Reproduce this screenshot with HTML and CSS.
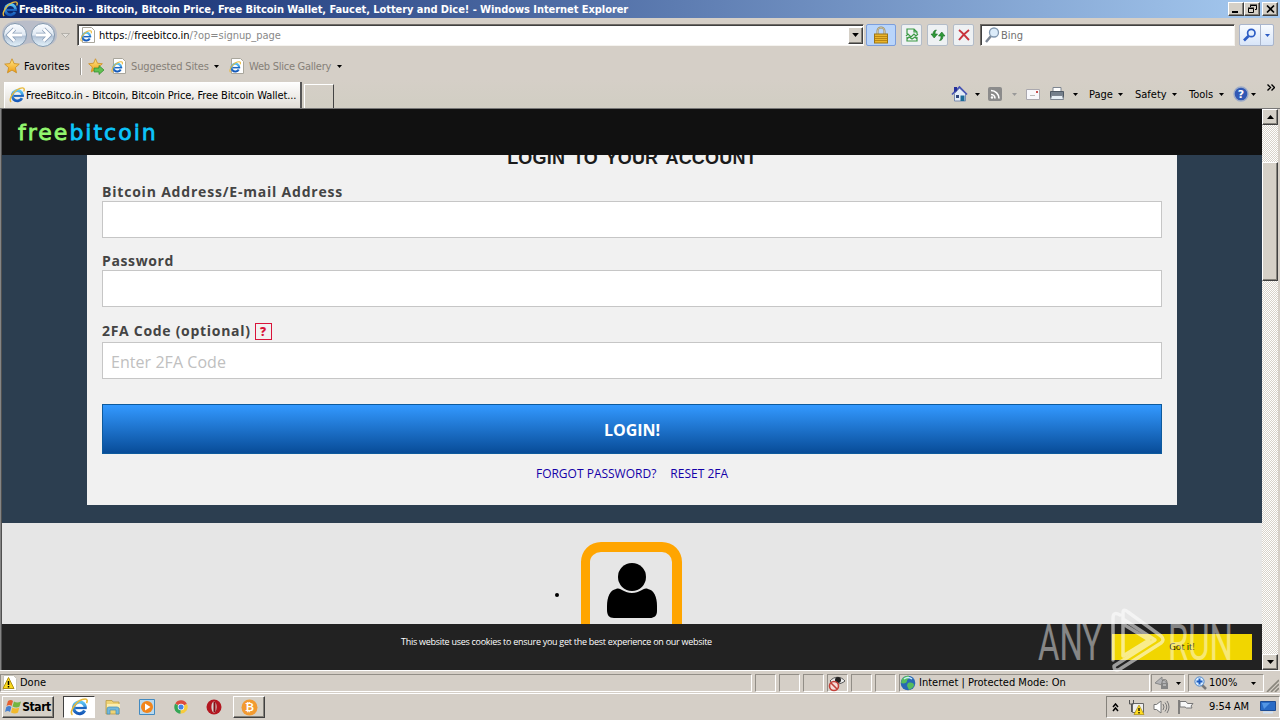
FILE: index.html
```html
<!DOCTYPE html>
<html lang="en">
<head>
<meta charset="utf-8">
<title>FreeBitco.in - Bitcoin, Bitcoin Price, Free Bitcoin Wallet, Faucet, Lottery and Dice!</title>
<link rel="stylesheet" href="styles.css">
</head>
<body>
<svg class="defs" width="0" height="0">
  <defs>
    <linearGradient id="blue" x1="0" y1="0" x2="0" y2="1"><stop offset="0" stop-color="#5bc4f5"/><stop offset="1" stop-color="#1558b8"/></linearGradient>
    <linearGradient id="glass" x1="0" y1="0" x2="0" y2="1"><stop offset="0" stop-color="#fafcff"/><stop offset=".5" stop-color="#dfe8f2"/><stop offset=".55" stop-color="#b4c4d8"/><stop offset="1" stop-color="#e4f2fa"/></linearGradient>
    <linearGradient id="gold" x1="0" y1="0" x2="0" y2="1"><stop offset="0" stop-color="#ffe88a"/><stop offset="1" stop-color="#f09c10"/></linearGradient>
    <symbol id="ie" viewBox="0 0 16 16">
      <path d="M13 11.200A5.200 5.200 0 1 1 13.600 8.400" fill="none" stroke="url(#blue)" stroke-width="2.800"/>
      <path d="M4.600 8.900h10.300" stroke="#1c66c0" stroke-width="2"/>
      <path d="M2.200 15C-1.500 12.500 6 1 13.500.900c2.200 0 2 2 1.200 3.600" fill="none" stroke="#e8b93a" stroke-width="1.400"/>
    </symbol>
    <symbol id="page-ie" viewBox="0 0 16 16">
      <path d="M2.500.5h9l3 3v12h-12z" fill="#fff" stroke="#a9a69c"/>
      <use href="#ie" x="0" y="3" width="12" height="12"/>
    </symbol>
    <symbol id="star" viewBox="0 0 16 16">
      <path d="M8 .8l2.100 4.800 5.200.500-3.900 3.500 1.100 5.200L8 12.100l-4.500 2.700 1.100-5.200L.7 6.100l5.200-.5z" fill="url(#gold)" stroke="#c98a1c" stroke-width=".8"/>
    </symbol>
    <symbol id="down" viewBox="0 0 5 3"><path d="M0 0h5L2.500 3z" fill="currentColor"/></symbol>
  </defs>
</svg>

<div class="titlebar">
  <svg class="i16"><use href="#ie"/></svg>
  <span class="title-text">FreeBitco.in - Bitcoin, Bitcoin Price, Free Bitcoin Wallet, Faucet, Lottery and Dice! - Windows Internet Explorer</span>
  <div class="win-buttons">
    <span class="raised"><svg width="11" height="10"><path d="M1 8h6" stroke="#000" stroke-width="2"/></svg></span>
    <span class="raised"><svg width="11" height="10"><path d="M3.500 3V1.500h6v4H8M1.500 4.500h5v4h-5zM3 1h7M1 4h6" fill="none" stroke="#000"/></svg></span>
    <span class="raised close"><svg width="11" height="10"><path d="M2 1.500l7 7M9 1.500l-7 7" stroke="#000" stroke-width="1.700"/></svg></span>
  </div>
</div>

<div class="navbar">
  <svg class="travel" width="70" height="30" viewBox="0 0 70 30">
    <path d="M12 3C20 1 38 1 45 3c8 1 12 6 12 13s-6 11-12 11c-7 0-9-3-14-3s-8 3-16 3C7 27 2 22 2 15S7 4 12 3z" fill="#b9bdc9"/>
    <circle cx="15" cy="16" r="11.500" fill="url(#glass)" stroke="#8197ad"/>
    <circle cx="43" cy="16" r="11.500" fill="url(#glass)" stroke="#8197ad"/>
    <path d="M22 16H9M14.500 10L8.500 16l6 6" fill="none" stroke="#8b9fb8" stroke-width="4.400"/>
    <path d="M22 16H9M14.500 10L8.500 16l6 6" fill="none" stroke="#fff" stroke-width="2.800"/>
    <path d="M36 16h13M43.500 10l6 6-6 6" fill="none" stroke="#8b9fb8" stroke-width="4.400"/>
    <path d="M36 16h13M43.500 10l6 6-6 6" fill="none" stroke="#fff" stroke-width="2.800"/>
    <path d="M61.500 14.500h8l-4 4z" fill="#e4e1dc" stroke="#aaa7a1" stroke-width=".8"/>
  </svg>
  <div class="address sunken">
    <svg class="i16"><use href="#page-ie"/></svg>
    <span class="url">https:<i>//</i>freebitco.in<i>/?op=signup_page</i></span>
    <span class="raised drop"><svg width="7" height="4"><use href="#down"/></svg></span>
  </div>
  <span class="tool lock"><svg width="16" height="18" viewBox="0 0 16 18"><path d="M4.500 9V5a3.500 3.500 0 0 1 7 0v4" fill="none" stroke="#9a8a60" stroke-width="2"/><path d="M4.500 9V5a3.500 3.500 0 0 1 7 0v4" fill="none" stroke="#d8d0b0" stroke-width=".8"/><rect x="1.500" y="8" width="13" height="9" fill="#eab52c" stroke="#9c7414"/><path d="M2 10.500h12M2 12.500h12M2 14.500h12" stroke="#b98512"/></svg></span>
  <span class="tool"><svg width="14" height="16" viewBox="0 0 14 16"><path d="M2 7V2h7l3 3v2M9 2v3h3M2 10v4h10v-4M1 9l2-2 3 3 3-3 2 2 2-2M2 12l2-2 3 2 3-2 2 2" fill="none" stroke="#3c9a45" stroke-width="1.200"/></svg></span>
  <span class="tool"><svg width="16" height="14" viewBox="0 0 16 14"><path d="M6.500 2C4 2 3 4 3 6H1l3.200 4L7.500 6H5C5 4 5.500 3 6.500 2zM9.500 12.500c2.500 0 3.500-2 3.500-4.500h2L11.800 4 8.500 8H11c0 2-.5 3.500-1.500 4.500z" fill="#2f9a38" stroke="#1c6d25" stroke-width=".6"/></svg></span>
  <span class="tool"><svg width="14" height="14" viewBox="0 0 14 14"><path d="M2 2c4 3 6 6 10 10M12 2C8 5 5 8 2 12" fill="none" stroke="#c8323c" stroke-width="2"/></svg></span>
  <div class="search sunken">
    <svg width="16" height="17" viewBox="0 0 16 17"><path d="M7 9l-5 6" stroke="#7d8795" stroke-width="2.500"/><circle cx="10" cy="5.500" r="4.500" fill="#dcecfa" stroke="#8298b0" stroke-width="1.300"/></svg>
    <span>Bing</span>
  </div>
  <div class="go"><svg width="20" height="20" viewBox="0 0 20 20"><path d="M8.500 11L4 15.500" stroke="#2c5cc4" stroke-width="2.600"/><circle cx="11.300" cy="8" r="3.700" fill="#e4effc" stroke="#2c5cc4" stroke-width="1.700"/></svg><span><svg width="5" height="3"><use href="#down"/></svg></span></div>
</div>

<div class="favorites">
  <svg class="i16 fav-star"><use href="#star"/></svg>
  <span class="fav-label">Favorites</span>
  <svg class="fav-add" width="18" height="17" viewBox="0 0 18 17"><use href="#star" width="15" height="15"/><path d="M6 10h5V7.500l5 4.500-5 4.500V14H6z" fill="#62c152" stroke="#2d8a2a" stroke-width=".7"/></svg>
  <svg class="i16 fav-page"><use href="#page-ie"/></svg>
  <span class="fav-suggested">Suggested Sites</span>
  <svg class="arrow"><use href="#down"/></svg>
  <svg class="i16 fav-page2"><use href="#page-ie"/></svg>
  <span class="fav-slice">Web Slice Gallery</span>
  <svg class="arrow"><use href="#down"/></svg>
</div>

<div class="tabs">
  <div class="tab"><svg class="i16"><use href="#ie"/></svg><span>FreeBitco.in - Bitcoin, Bitcoin Price, Free Bitcoin Wallet...</span></div>
  <div class="newtab"></div>
  <div class="commands">
    <svg class="home" width="17" height="18" viewBox="0 0 17 18"><path d="M3.500 8.500V16h11V8.500L8.500 3z" fill="#e3ecf8" stroke="#7a8cb0"/><path d="M1 9.500L8.500 2 16 9.500" fill="none" stroke="#4654b4" stroke-width="1.700"/><path d="M3 2h3v4L3 7z" fill="#26309c"/><path d="M9.500 10.500h4V16h-4z" fill="#1c6c98"/><path d="M5 10h3v3H5z" fill="#30467c"/></svg>
    <svg class="arrow a1"><use href="#down"/></svg>
    <svg class="rss" width="14" height="14" viewBox="0 0 14 14"><rect width="14" height="14" rx="2" fill="#8b8b8b"/><path d="M3 7.500a4 4 0 0 1 4 4M3 3.500a8 8 0 0 1 8 8" fill="none" stroke="#fff" stroke-width="1.600"/><circle cx="4" cy="10.500" r="1.200" fill="#fff"/></svg>
    <svg class="arrow a2"><use href="#down"/></svg>
    <svg class="mail" width="14" height="11" viewBox="0 0 14 11"><path d="M.5.500h13v10H.5z" fill="#f8f8fc" stroke="#aaa8ae"/><path d="M10 2h2v2h-2z" fill="#c85050"/><path d="M4 6.500h5" stroke="#bbb"/></svg>
    <svg class="printer" width="16" height="16" viewBox="0 0 16 16"><path d="M4 1.500h8V7H4z" fill="#fff" stroke="#7d8590"/><path d="M1.500 5.500h13v6h-13z" fill="#75808c" stroke="#4f5964"/><path d="M2.500 9.500h11l1 4h-13z" fill="#e8f0f6" stroke="#7d8590"/></svg>
    <svg class="arrow a3"><use href="#down"/></svg>
    <span class="c-page">Page</span><svg class="arrow"><use href="#down"/></svg>
    <span class="c-safety">Safety</span><svg class="arrow"><use href="#down"/></svg>
    <span class="c-tools">Tools</span><svg class="arrow"><use href="#down"/></svg>
    <svg class="help" width="16" height="16" viewBox="0 0 16 16"><circle cx="8" cy="8" r="7" fill="#3158b4" stroke="#9cabc8" stroke-width="1.400"/><text x="8" y="12" text-anchor="middle">?</text></svg>
    <svg class="arrow a4"><use href="#down"/></svg>
    <svg class="more" width="8" height="7" viewBox="0 0 8 7"><path d="M.5.500l3 3-3 3M4.500.500l3 3-3 3" fill="none" stroke="#000" stroke-width="1.400"/></svg>
  </div>
</div>

<div class="viewport">
  <main class="page">
    <header class="site-header"><span class="free">free</span><span class="coin">bitcoin</span></header>
    <section class="hero">
      <form class="panel">
        <h1>LOGIN TO YOUR ACCOUNT</h1>
        <label class="l1"><span>Bitcoin Address/E-mail Address</span></label>
        <div class="field"></div>
        <label class="l2"><span>Password</span></label>
        <div class="field"></div>
        <label class="l3"><span>2FA Code (optional)</span><b>?</b></label>
        <div class="field"><span>Enter 2FA Code</span></div>
        <div class="login"><span>LOGIN!</span></div>
        <div class="links"><a class="forgot">FORGOT PASSWORD?</a><a class="reset">RESET 2FA</a></div>
      </form>
    </section>
    <section class="feature">
      <span class="bullet"></span>
      <div class="user-box"><svg width="52" height="57" viewBox="0 0 52 57"><circle cx="26" cy="14" r="14" fill="#000"/><path d="M10 26c5-2 7 4 16 4s11-6 16-4c6 1 9 8 9 17v5c0 5-3 7-7 7H8c-5 0-7-3-7-8v-4c0-9 3-16 9-17z" fill="#000"/></svg></div>
    </section>
    <footer class="cookie"><span>This website uses cookies to ensure you get the best experience on our website</span><button>Got it!</button></footer>
  </main>
  <div class="scrollbar">
    <div class="raised sb-btn"><svg width="7" height="4" viewBox="0 0 7 4"><path d="M0 4h7L3.500 0z"/></svg></div>
    <div class="raised sb-thumb"></div>
    <div class="raised sb-btn sb-down"><svg width="7" height="4" viewBox="0 0 7 4"><path d="M0 0h7L3.500 4z"/></svg></div>
  </div>
</div>

<div class="status">
  <div class="cell done"><svg width="16" height="16" viewBox="0 0 16 16"><path d="M1.500.500h10l3 3v12h-13z" fill="#fff" stroke="#c8c5bc"/><path d="M6.500 2.500L12 13.500H1z" fill="#fbd91c" stroke="#b09010"/><path d="M6.500 6v4M6.500 11v1.500" stroke="#000" stroke-width="1.500"/></svg><span>Done</span></div>
  <div class="cell"></div><div class="cell"></div><div class="cell"></div>
  <div class="cell"><svg width="18" height="17" viewBox="0 0 18 17"><path d="M2 6C6 1 13 1 17 6c-5 4-11 4-15 0" fill="#eee" stroke="#555"/><circle cx="10" cy="5" r="3" fill="#222"/><circle cx="6" cy="11" r="4.500" fill="#f5dcd8" stroke="#c2413a" stroke-width="1.600"/><path d="M3 8l6 6" stroke="#c2413a" stroke-width="1.600"/></svg></div>
  <div class="cell"></div><div class="cell"></div>
  <div class="cell zone"><svg width="16" height="16" viewBox="0 0 16 16"><circle cx="8" cy="8" r="7.300" fill="#2868b4"/><path d="M2 4c2-3 6-4 7-3 1 3-2 3-2 5S4 9 1 8zM8 8c3-1 6 0 6 2s-3 4-5 5c-1-3-3-4-1-7z" fill="#56bd5c"/><path d="M4 4q4-3 8 0" stroke="#c9efff" stroke-width="1.500" fill="none"/></svg><span>Internet | Protected Mode: On</span></div>
  <div class="cell filter"><svg width="18" height="16" viewBox="0 0 18 16"><path d="M1 8l7-6v3q5 0 5 6H8v-1z" fill="#b4b4b6" stroke="#898989"/><path d="M8 8V7a2.500 2.500 0 0 1 5 0v1" fill="none" stroke="#777"/><path d="M7 8h7v6H7z" fill="#858585"/><path d="M9 10h3" stroke="#ddd"/></svg><svg class="arrow"><use href="#down"/></svg></div>
  <div class="cell zoom"><svg width="14" height="15" viewBox="0 0 14 15"><path d="M8 9l4 4" stroke="#777" stroke-width="2.500"/><circle cx="5.500" cy="5.500" r="4.600" fill="#d9edff" stroke="#4d86ca"/><path d="M5.500 2.500v6M2.500 5.500h6" stroke="#1d5cc0" stroke-width="2"/></svg><span>100%</span><svg class="arrow"><use href="#down"/></svg></div>
  <svg class="grip" width="13" height="13"><path d="M1 13L13 1M5 13l8-8M9 13l4-4" stroke="#8a877e" stroke-width="1.600"/></svg>
</div>

<div class="taskbar">
  <div class="start raised"><svg width="17" height="16" viewBox="0 0 17 16"><path d="M3 2q3-2 5 0L6.500 7q-2-2-5 0z" fill="#e66030"/><path d="M9 2.500q3 2 7 0L14.500 7.500q-3 2-7 0z" fill="#74b540"/><path d="M1.300 8q3-2 5 0L5 13q-2-2-5 0z" fill="#4680d0"/><path d="M7.300 8.500q3 2 7 0L13 13.500q-3 2-7 0z" fill="#f2b92c"/></svg><span>Start</span></div>
  <div class="task-ie"><svg width="18" height="18"><use href="#ie"/></svg></div>
  <svg class="t-folder" width="16" height="16" viewBox="0 0 16 16"><path d="M1 3V1.500h6L8 3h6v12H1z" fill="#efd374" stroke="#b99a44" stroke-width=".8"/><path d="M2 5h13v4H2z" fill="#fbedb0"/><path d="M2 15v-5q0-2 2-2h8q2 0 2 2v5h-3v-4H5v4z" fill="#72b8dc" stroke="#448eb8" stroke-width=".7"/></svg>
  <svg class="t-media" width="16" height="16" viewBox="0 0 16 16"><path d="M.5.500h15v15H.5z" fill="#b9d9ee" stroke="#438ac0"/><circle cx="8" cy="8" r="6" fill="#f2851b"/><path d="M6 4.500v7l5.500-3.500z" fill="#fff"/></svg>
  <svg class="t-chrome" width="14" height="14" viewBox="0 0 16 16"><path d="M8 8L1.500 4A7.500 7.500 0 0 1 14.700 4.500z" fill="#dd4b3e"/><path d="M8 8L1.300 4.200A7.600 7.600 0 0 0 7.500 15.600z" fill="#35a655"/><path d="M8 8l6.700-3.500A7.500 7.500 0 0 1 7.500 15.500z" fill="#f7cb3c"/><circle cx="8" cy="8" r="3.700" fill="#fff"/><circle cx="8" cy="8" r="2.900" fill="#4382e6"/></svg>
  <svg class="t-opera" width="16" height="16" viewBox="0 0 16 16"><circle cx="8" cy="8" r="7.500" fill="#b31720"/><ellipse cx="8" cy="8" rx="2.600" ry="5.500" fill="#d9d4cf"/><path d="M7.500 3h2v10h-2z" fill="#891016"/></svg>
  <div class="task-bit raised"><svg width="17" height="17" viewBox="0 0 17 17"><circle cx="8.500" cy="8.500" r="8" fill="#f29a31"/><text x="8.500" y="12" text-anchor="middle">₿</text></svg></div>
  <div class="tray">
    <svg class="y-chev" width="7" height="9" viewBox="0 0 7 9"><path d="M1 4l2.500-3L6 4M1 8l2.500-3L6 8" fill="none" stroke="#000" stroke-width="1.500"/></svg>
    <svg class="y-net" width="17" height="16" viewBox="0 0 17 16"><path d="M4.500 4.500h11v9h-11z" fill="#eee" stroke="#666"/><path d="M1.500 1v4h4V1M3.500 5v8" fill="none" stroke="#555"/><path d="M11 6l5 9.500H6z" fill="#ffdc20" stroke="#a78c10" stroke-width=".7"/><path d="M11 9v3M11 13v1.500" stroke="#000" stroke-width="1.300"/></svg>
    <svg class="y-vol" width="17" height="14" viewBox="0 0 17 14"><path d="M1 4.500h2.500L8 1v12L3.500 9.500H1z" fill="#fff" stroke="#777"/><path d="M10 4q2 3 0 6M12 2.500q3.500 4.500 0 9M14 1q4 6 0 12" fill="none" stroke="#777"/></svg>
    <svg class="y-flag" width="17" height="14" viewBox="0 0 17 14"><path d="M2 0v14" stroke="#666" stroke-width="1.500"/><path d="M3 1.500h6l1.500 2H16l-2 2.500 1 2H9.500L8 7H3z" fill="#f8f8f8" stroke="#777"/></svg>
    <span>9:54 AM</span>
    <svg class="y-desk" width="16" height="13" viewBox="0 0 16 13"><path d="M.5.500h15v9H.5z" fill="#296bc6" stroke="#1d4c94"/><path d="M2 2h8L4 8z" fill="#5396e4"/><path d="M3 11.500h10" stroke="#cfe0f4" stroke-width="2"/></svg>
  </div>
</div>

<svg class="watermark" width="200" height="68" viewBox="0 0 200 68">
  <g class="wm-text"><text x="3" y="54" textLength="64" lengthAdjust="spacingAndGlyphs">ANY</text><text x="133" y="54" textLength="65" lengthAdjust="spacingAndGlyphs">RUN</text></g>
  <g fill="none" stroke="#fff" stroke-width="3.500" stroke-linejoin="round" stroke-linecap="round" opacity=".55"><path d="M78 54V12q0-7 7-3M88 22V7q0-5 5-1l33 24q4 4 0 7L85 63q-6 3-6-3l41-26L88 13M88 22v28l26-16-26-16"/></g>
</svg>
</body>
</html>
```
FILE: styles.css
```css
* { box-sizing: border-box; }
body {
  margin: 0; width: 1280px; height: 720px; overflow: hidden; position: relative;
  display: flex; flex-direction: column; background: #d5cfc7; color: #000;
  font: 11px/14px "DejaVu Sans Condensed", "DejaVu Sans", sans-serif; white-space: nowrap;
}
svg { display: block; flex: none; }
span { flex: none; }
.defs { height: 0; }
.i16 { width: 16px; height: 16px; }
.arrow { width: 5px; height: 3px; }
.raised { background: #d5d0c7; border: 1px solid; border-color: #fff #404040 #404040 #fff; box-shadow: inset -1px -1px #85827b; display: flex; align-items: center; justify-content: center; }
.sunken { background: #fff; border: 1px solid; border-color: #6f6b66 #f5f3ef #f5f3ef #6f6b66; box-shadow: inset 1px 1px #404040; }

.titlebar { height: 18px; display: flex; align-items: center; padding-left: 2px; background: linear-gradient(90deg, #0b246a, #a6caf0); color: #fff; font-weight: bold; }
.title-text { margin-left: 1px; padding-top: 1px; letter-spacing: -.06px; }
.win-buttons { display: flex; margin-left: auto; padding-right: 2px; }
.win-buttons .raised { width: 16px; height: 14px; }
.win-buttons .close { margin-left: 2px; }

.navbar { height: 34px; display: flex; align-items: flex-start; padding-top: 6px; }
.travel { margin-top: -5px; }
.address { width: 787px; height: 22px; margin-left: 7px; display: flex; align-items: center; padding-left: 2px; }
.url { margin-left: 3px; padding-top: 2px; letter-spacing: -.04px; }
.url i { color: #888; font-style: normal; }
.drop { width: 15px; height: 17px; margin-left: auto; }
.drop svg { width: 7px; height: 4px; }
.tool { width: 21px; height: 22px; margin-left: 5px; display: flex; align-items: center; justify-content: center; border: 1px solid #b3bcc8; border-radius: 2px; background: #eef1f3; }
.tool.lock { width: 30px; margin-left: 2px; background: #b9d5fb; border-color: #7b9edc; }
.search { width: 255px; height: 22px; margin-left: 6px; display: flex; align-items: center; padding-left: 3px; color: #707070; }
.search span { margin-left: 1px; padding-top: 2px; }
.go { width: 35px; height: 22px; margin-left: 4px; display: flex; align-items: center; border: 1px solid #a9b5cc; border-radius: 2px; background: linear-gradient(#f8fbff, #d8e5f8); color: #2c5cc4; }
.go span { height: 20px; flex: 1; display: flex; align-items: center; justify-content: center; border-left: 1px solid #a9b5cc; }

.favorites { height: 28px; display: flex; align-items: center; padding-left: 4px; color: #858078; }
.favorites span { padding-top: 2px; }
.favorites .arrow { color: #000; }
.favorites .fav-label { color: #000; width: 58px; margin-left: 4px; padding-top: 1px; letter-spacing: .12px; }
.fav-add { margin-left: 6px; box-shadow: -6px 0 #d5cfc7, -7px 0 #fff, -8px 0 #99958e; }
.fav-page { margin-left: 5px; }
.fav-suggested { width: 83px; margin-left: 4px; letter-spacing: -.15px; }
.fav-page2 { margin-left: 10px; }
.fav-slice { width: 88px; margin-left: 4px; letter-spacing: -.25px; }

.tabs { height: 29px; display: flex; align-items: flex-end; padding-left: 4px; border-bottom: 1px solid #777; background: linear-gradient(#d5cfc7, #d1cec3); }
.tab { width: 298px; height: 26px; display: flex; align-items: center; padding-left: 4px; background: linear-gradient(#fff, #e0dcd5); border-right: 2px solid #555; border-left: 1px solid #fff; }
.tab span { margin-left: 1px; padding-top: 2px; letter-spacing: -.1px; }
.newtab { width: 30px; height: 24px; margin-left: 2px; border: solid; border-width: 1px 1px 0; border-color: #fff #444 #fff #fff; }
.commands { height: 28px; margin-left: 617px; display: flex; align-items: center; }
.commands span { letter-spacing: 0; padding-top: 1px; }
.a1 { margin-left: 7px; }
.rss { margin-left: 8px; }
.a2 { margin-left: 10px; color: #999; }
.mail { margin-left: 9px; }
.printer { margin-left: 9px; }
.a3 { margin-left: 8px; }
.c-page { width: 25px; margin: 0 4px 0 11px; }
.c-safety { width: 33px; margin: 0 4px 0 12px; }
.c-tools { width: 26px; margin: 0 4px 0 12px; }
.help { margin-left: 9px; }
.help text { font: bold 11px "DejaVu Sans", sans-serif; fill: #fff; }
.a4 { margin-left: 2px; }
.more { margin: -13px 0 0 11px; }

.viewport { height: 561px; display: flex; padding-right: 2px; border-left: 1px solid #858585; box-shadow: inset 1px 0 #505050; padding-left: 1px; }
.page { width: 1260px; font-family: "Open Sans", sans-serif; }
.site-header { height: 46px; padding: 1px 0 0 16px; background: #111; display: flex; align-items: center; font: 22px/26px "DejaVu Sans", sans-serif; letter-spacing: 2px; }
.free { color: #92f66e; -webkit-text-stroke: .8px #92f66e; }
.coin { color: #0cc5fa; -webkit-text-stroke: .8px #0cc5fa; }
.hero { height: 368px; overflow: hidden; background: #2c3e50; padding: 0 85px; }
.panel { height: 350px; background: #f1f1f1; padding: 0 15px; display: flow-root; }
h1 { margin: -9px 0 0; height: 24px; text-align: center; font: bold 18px/24px "Liberation Sans", sans-serif; color: #1b1b1b; letter-spacing: .2px; word-spacing: 2.6px; }
label { display: flex; align-items: center; height: 20px; font: bold 14px/20px "Open Sans", sans-serif; color: #444; }
.l1 { margin-top: 11px; padding-top: 2px; letter-spacing: .8px; }
.l2 { margin-top: 12px; padding-top: 2px; letter-spacing: .63px; }
.l3 { margin-top: 14px; height: 21px; letter-spacing: .7px; }
.l3 span { padding-bottom: 2px; }
label b { width: 17px; height: 17px; margin: -1px 0 0 4px; border: 1px solid #d9143a; color: #d9143a; font-size: 12px; line-height: 16px; text-align: center; letter-spacing: 0; }
.field { height: 37px; border: 1px solid #c6c6c6; background: #fff; padding-left: 8px; font-size: 16px; line-height: 38px; color: #c0c0c0; letter-spacing: .05px; }
.login { height: 50px; margin-top: 25px; border: 1px solid #0d5a9d; background: linear-gradient(#3399ff, #084c98); color: #fff; text-align: center; font: bold 16px/50px "Open Sans", sans-serif; }
.links { display: flex; justify-content: center; gap: 14px; margin-top: 10px; font-size: 12px; line-height: 19px; color: #1400a8; }
.feature { height: 101px; overflow: hidden; background: #e6e6e6; display: flex; padding-left: 553px; }
.bullet { width: 4px; height: 4px; border-radius: 2px; background: #000; margin-top: 70px; }
.user-box { width: 101px; height: 130px; margin: 19px 0 0 22px; border: 10px solid #ffa500; border-left-width: 9px; border-radius: 20px; padding: 11px 0 0 16px; }
.cookie { height: 46px; background: #222; color: #fff; display: flex; justify-content: flex-end; padding-right: 10px; font-size: 9px; line-height: 36px; }
.cookie span { width: 711px; letter-spacing: -.28px; }
.cookie button { width: 140px; height: 26px; margin-top: 10px; padding: 0; border: 0; background: #f1d600; font: 9px/26px "Open Sans", sans-serif; }
.scrollbar { width: 16px; background: repeating-conic-gradient(#fff 0 25%, #d8d3ca 0 50%) 0 0 / 2px 2px; display: flex; flex-direction: column; }
.sb-btn { height: 16px; }
.sb-thumb { height: 119px; margin-top: 37px; }
.sb-down { margin-top: auto; }

.status { height: 24px; display: flex; align-items: flex-end; padding-bottom: 1px; border-top: 1px solid #fff; border-bottom: 1px solid #fff; }
.cell { flex: none; width: 21px; height: 18px; margin-right: 3px; border: 1px solid; border-color: #928e87 #fff #fff #928e87; display: flex; align-items: center; }
.cell.done { width: 752px; padding-left: 1px; }
.done span { margin-left: 2px; }
.cell.zone { width: 251px; margin-right: 1px; }
.zone span { margin-left: 3px; }
.cell.filter { width: 34px; padding-left: 2px; }
.filter .arrow { margin-left: 4px; }
.cell.zoom { width: 76px; padding-left: 5px; margin-right: 1px; }
.zoom span { width: 30px; margin: 0 12px 0 1px; }
.grip { margin-left: 1px; }

.taskbar { height: 26px; display: flex; align-items: center; padding-left: 2px; }
.start { width: 52px; height: 22px; font-weight: bold; font-size: 12px; letter-spacing: -.4px; }
.task-ie { width: 32px; height: 22px; margin-left: 9px; background: #fff; border: 1px solid; border-color: #404040 #fff #fff #404040; display: flex; align-items: center; justify-content: center; }
.t-folder { margin-left: 10px; }
.t-media { margin-left: 18px; }
.t-chrome { margin-left: 19px; }
.t-opera { margin-left: 18px; }
.task-bit { width: 32px; height: 22px; margin-left: 11px; }
.task-bit text { font: bold 11px "DejaVu Sans", sans-serif; fill: #fff; }
.tray { width: 174px; height: 22px; margin-left: auto; border: 1px solid; border-color: #85827b #fff #fff #85827b; display: flex; align-items: center; padding-left: 5px; }
.y-net { margin-left: 9px; }
.y-vol { margin-left: 8px; }
.y-flag { margin-left: 7px; }
.tray span { width: 41px; margin-left: 15px; letter-spacing: -.1px; }
.y-desk { margin-left: 10px; }

.watermark { position: absolute; left: 1035px; top: 606px; }
.wm-text { font: 400 50px Roboto, sans-serif; fill: #fff; opacity: .45; }
```
